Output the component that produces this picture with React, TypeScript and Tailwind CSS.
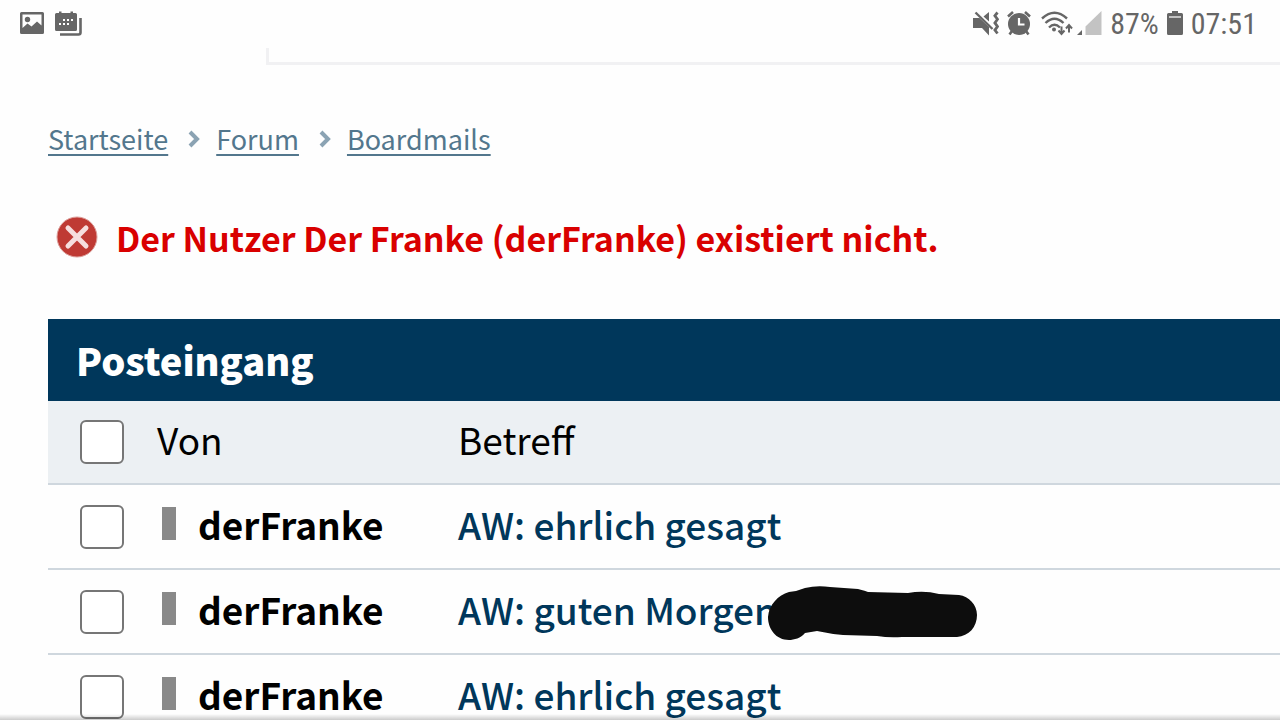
import { Fragment } from 'react';

const crumbs = ['Startseite', 'Forum', 'Boardmails'];

const mails = [
  { id: 1, from: 'derFranke', subject: 'AW: ehrlich gesagt', redacted: false },
  { id: 2, from: 'derFranke', subject: 'AW: guten Morgen', redacted: true },
  { id: 3, from: 'derFranke', subject: 'AW: ehrlich gesagt', redacted: false },
];

function ImageIcon() {
  return (
    <svg width="24" height="22" viewBox="0 0 24 22" fill="#666">
      <path
        fillRule="evenodd"
        d="M1.500 0h21A1.500 1.500 0 0 1 24 1.500v19a1.500 1.500 0 0 1-1.500 1.500h-21A1.500 1.500 0 0 1 0 20.500v-19A1.500 1.500 0 0 1 1.500 0ZM2.500 2.500V16l5-4.500 4 3 5.500-5 4.500 4V2.500Z"
      />
      <circle cx="7.500" cy="7.500" r="2.700" />
    </svg>
  );
}

function CalendarIcon() {
  return (
    <svg width="27" height="25" viewBox="0 0 27 25" fill="#666">
      <path d="M1.500 2H4V.500h2.500V2h9V.500H18V2h2.500A1.500 1.500 0 0 1 22 3.500v15a1.500 1.500 0 0 1-1.500 1.500h-19A1.500 1.500 0 0 1 0 18.500v-15A1.500 1.500 0 0 1 1.500 2Z" />
      <path d="M25.500 7v14.500q0 2-2 2H5" fill="none" stroke="#666" strokeWidth="2.600" />
      <path
        fill="#fff"
        d="M8 8h2v2H8zM12 8h2v2h-2zM16 8h2v2h-2zM4 12h2v2H4zM8 12h2v2H8zM12 12h2v2h-2z"
      />
    </svg>
  );
}

function MuteVibrateIcon() {
  return (
    <svg width="26" height="25" viewBox="0 0 26 25" fill="#666">
      <path d="M0 7h6.500L16 16v8.500L9 17H0ZM10.500 5.500 16 1v9.500Z" />
      <path d="m2.500 1.500 17 16.500" stroke="#666" strokeWidth="2.400" />
      <path
        d="m24.500 1.500-2.600 3.200 2.600 3.600-2.600 3.600 2.600 3.600-2.600 3.600 2.600 3.400"
        fill="none"
        stroke="#666"
        strokeWidth="2.800"
      />
    </svg>
  );
}

function AlarmIcon() {
  return (
    <svg width="24" height="25" viewBox="0 0 24 25" fill="#666">
      <circle cx="12" cy="13" r="11" />
      <path
        d="M1 5.500 6 1M23 5.500 18 1M5 20l-2.500 3.500M19 20l2.500 3.500"
        stroke="#666"
        strokeWidth="2.600"
      />
      <path d="M12 7v6.500h5.500" fill="none" stroke="#fff" strokeWidth="2.200" />
    </svg>
  );
}

function WifiIcon() {
  return (
    <svg width="32" height="25" viewBox="0 0 32 25" fill="none" stroke="#666" strokeWidth="2.400">
      <path d="M1 7.500Q13.500-4 26 7.500M4.500 12Q13.500 3.500 22.500 12M8 16.500q5.500-5.500 11 0" />
      <circle cx="13" cy="18.500" r="2" fill="#666" stroke="none" />
      <path d="M20.500 15.500v7M17.500 19.500l3 3.500 3-3.500M28 21.500v-7M25 17.500l3-3.500 3 3.500" strokeWidth="2" />
    </svg>
  );
}

function SignalIcon() {
  return (
    <svg width="25" height="24" viewBox="0 0 25 24">
      <path d="M5 19v5H0Z" fill="#666" />
      <path d="M24.500 0v24H8.500V15.500Z" fill="#c3c3c3" />
    </svg>
  );
}

function BatteryIcon() {
  return (
    <svg width="16" height="24" viewBox="0 0 16 24">
      <path d="M5 0h6v2h3.500Q16 2 16 3.500v19q0 1.500-1.500 1.500h-13Q0 24 0 22.500v-19Q0 2 1.500 2H5Z" fill="#666" />
      <path d="M2 5h12v2H2z" fill="#c3c3c3" />
    </svg>
  );
}

function ErrorIcon() {
  return (
    <svg width="42" height="42" viewBox="0 0 42 42">
      <circle cx="21" cy="21" r="20" fill="#bf3a34" stroke="#dda09c" strokeWidth="1" />
      <path d="m12 12 18 18M30 12 12 30" stroke="#f6dede" strokeWidth="5" strokeLinecap="round" />
    </svg>
  );
}

// Black marker stroke that hides the end of a subject line
function Scribble() {
  return (
    <svg
      className="absolute top-1 left-[309px]"
      width="212"
      height="56"
      viewBox="0 0 212 56"
      fill="#0d0d0d"
      aria-hidden="true"
    >
      <path d="M1 31C2 19 11 9 22 6Q31 5 38 2q12-3 25-1l28 2q8 2 10 3l40 1q16-3 31 1l20 1c10 1 18 10 18 20 0 12-8 21-20 22h-55q-13 1-25-1l-34-1q-12-1-26-4l-12 2C34 52 27 54 22 54 9 54 1 43 1 31Z" />
    </svg>
  );
}

function Checkbox({ label }: { label: string }) {
  return (
    <input
      type="checkbox"
      aria-label={label}
      className="block size-11 appearance-none rounded-md border-2 border-[#767676] bg-white checked:bg-[#00375b]"
    />
  );
}

function StatusBar() {
  return (
    <header className="flex h-[46px] items-center justify-between pr-[23px] pl-5 font-['Roboto_Condensed',Roboto,sans-serif] text-[30px] text-[#666]">
      <div className="flex items-center gap-[11px]">
        <ImageIcon />
        <CalendarIcon />
      </div>
      <div className="flex items-center gap-2">
        <MuteVibrateIcon />
        <AlarmIcon />
        <div className="flex items-center gap-1 pl-0.5">
          <WifiIcon />
          <SignalIcon />
        </div>
        <span>87%</span>
        <BatteryIcon />
        <span>07:51</span>
      </div>
    </header>
  );
}

export default function App() {
  return (
    <div className="relative h-screen overflow-hidden bg-[#fefefe] font-['Noto_Sans_CJK_SC',sans-serif] text-black">
      <StatusBar />
      <div className="mt-0.5 ml-[266px] h-[17px] border-b-3 border-l-3 border-[#f1f1f3]" />

      <main className="pl-12">
        <nav aria-label="Breadcrumb" className="mt-[54px] flex h-10 items-center text-[27px] leading-10 text-[#53778d]">
          {crumbs.map((crumb, index) => (
            <Fragment key={crumb}>
              {index > 0 && (
                <svg className="mr-4 ml-5" width="12" height="20" viewBox="0 0 12 20" fill="none">
                  <path d="m2 3 7 7-7 7" stroke="#8ba3b3" strokeWidth="4" />
                </svg>
              )}
              <a href="#" className="underline decoration-2 underline-offset-4">
                {crumb}
              </a>
            </Fragment>
          ))}
        </nav>

        <div role="alert" className="mt-[50px] flex h-14 items-center gap-[18px] pl-2 text-[34px] font-bold text-[#d90000]">
          <ErrorIcon />
          <p>Der Nutzer Der Franke (derFranke) existiert nicht.</p>
        </div>

        <table className="mt-[54px] w-full table-fixed border-collapse text-left text-[37px] leading-[54px]">
          <caption className="h-[82px] bg-[#00375b] pt-3.5 pl-7 text-left text-[38px] font-black text-white">
            Posteingang
          </caption>
          <colgroup>
            <col className="w-[95px]" />
            <col className="w-[301px]" />
            <col />
          </colgroup>
          <thead>
            <tr className="h-[83px] border-b-2 border-[#cfd7de] bg-[#ecf0f3]">
              <th className="pl-8">
                <Checkbox label="Alle auswählen" />
              </th>
              <th className="pb-1.5 pl-3.5 font-normal">Von</th>
              <th className="pb-1.5 pl-3.5 font-normal">Betreff</th>
            </tr>
          </thead>
          <tbody>
            {mails.map((mail) => (
              <tr key={mail.id} className="h-[85px] border-b-2 border-[#cfd7de]">
                <td className="pl-8">
                  <Checkbox label={`${mail.subject} auswählen`} />
                </td>
                <td className="pb-1.5 pl-[19px] font-bold">
                  <div className="flex items-center gap-[22px]">
                    <span className="h-[33px] w-[14px] bg-[#898989]" />
                    {mail.from}
                  </div>
                </td>
                <td className="pb-1.5 pl-3.5 font-medium">
                  <div className="relative">
                    <a href="#" className="text-[#00375b]">
                      {mail.subject}
                    </a>
                    {mail.redacted && <Scribble />}
                  </div>
                </td>
              </tr>
            ))}
          </tbody>
        </table>
      </main>

      {/* Shadow along the lower screen edge */}
      <div className="pointer-events-none absolute inset-x-0 bottom-0 h-1.5 bg-linear-to-b from-transparent to-black/20" />
    </div>
  );
}
